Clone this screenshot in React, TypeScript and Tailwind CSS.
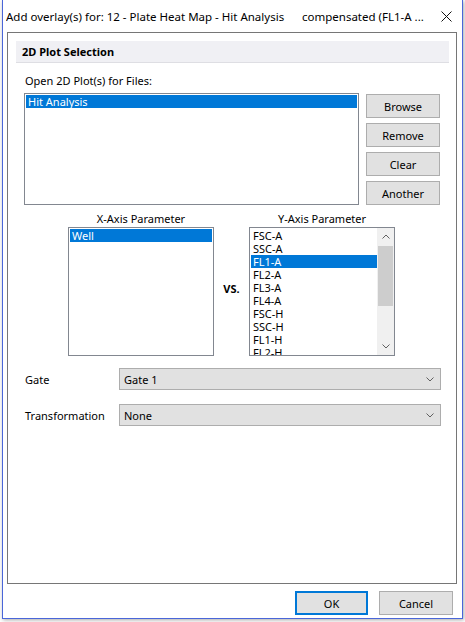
import React from 'react';

const files = ['Hit Analysis'];
const yParams = ['FSC-A', 'SSC-A', 'FL1-A', 'FL2-A', 'FL3-A', 'FL4-A', 'FSC-H', 'SSC-H', 'FL1-H', 'FL2-H'];

function Chevron({ up = false }: { up?: boolean }) {
  return (
    <svg width="8" height="5" viewBox="0 0 8 5" className={up ? 'rotate-180' : ''}>
      <path d="M0.5 0.5 L4 4 L7.5 0.5" fill="none" stroke="#606060" strokeWidth="1" />
    </svg>
  );
}

function SideButton({ label }: { label: string }) {
  return (
    <div className="w-[74px] h-[24px] border border-[#adadad] bg-[#e1e1e1] flex items-center justify-center">
      {label}
    </div>
  );
}

function Combo({ value }: { value: string }) {
  return (
    <div className="w-[322px] h-[22px] border border-[#adadad] bg-[#e1e1e1] flex items-center pl-[4px] pr-[6px]">
      <span className="flex-1">{value}</span>
      <Chevron />
    </div>
  );
}

export default function App() {
  return (
    <div className="w-[465px] h-[622px] bg-white text-[11px] text-black font-['Noto_Sans',sans-serif] leading-[15px]">
      <div className="ml-[2px] w-[461px] h-[619px] border-x border-b border-[#4a66d9] bg-white flex flex-col shadow-[1px_1px_4px_rgba(0,0,0,0.35)]">
        {/* title bar */}
        <div className="h-[32px] flex items-center pl-[3px] shrink-0 text-[11.5px]">
          <span className="w-[296px] whitespace-nowrap overflow-hidden">Add overlay(s) for: 12 - Plate Heat Map - Hit Analysis</span>
          <span className="whitespace-nowrap">compensated (FL1-A ...</span>
          <svg width="11" height="11" viewBox="0 0 11 11" className="ml-auto mr-[10px]">
            <path d="M0.5 0.5 L10.5 10.5 M10.5 0.5 L0.5 10.5" stroke="#111" strokeWidth="1" />
          </svg>
        </div>

        {/* group box */}
        <div className="ml-[4px] w-[450px] h-[552px] border border-[#767676] shrink-0">
          <div className="mt-[8px] ml-[8px] w-[433px] h-[22px] bg-[#f0f0f4] border-b border-[#dedee3] flex items-center pl-[6px] font-bold">
            2D Plot Selection
          </div>

          <div className="mt-[9px] ml-[17px] h-[16px] flex items-center">Open 2D Plot(s) for Files:</div>

          <div className="mt-[5px] ml-[16px] flex">
            <div className="w-[335px] h-[112px] border border-[#828790] p-[1px]">
              {files.map((f) => (
                <div key={f} className="h-[13px] leading-[13px] bg-[#0078d7] text-white pl-[2px]">{f}</div>
              ))}
            </div>
            <div className="ml-[7px] mt-[1px] flex flex-col gap-[5px]">
              <SideButton label="Browse" />
              <SideButton label="Remove" />
              <SideButton label="Clear" />
              <SideButton label="Another" />
            </div>
          </div>

          <div className="mt-[5px] ml-[60px] flex">
            <div className="w-[146px] flex flex-col">
              <div className="h-[16px] flex items-center justify-center">X-Axis Parameter</div>
              <div className="mt-[1px] h-[129px] border border-[#828790] p-[1px]">
                <div className="h-[13px] leading-[13px] bg-[#0078d7] text-white pl-[2px]">Well</div>
              </div>
            </div>
            <div className="w-[35px] flex items-center justify-center pt-[10px] font-bold">VS.</div>
            <div className="w-[146px] flex flex-col">
              <div className="h-[16px] flex items-center justify-center">Y-Axis Parameter</div>
              <div className="mt-[1px] h-[129px] border border-[#828790] flex overflow-hidden">
                <div className="flex-1 pl-[1px] pt-[1px] overflow-hidden">
                  {yParams.map((p) => (
                    <div
                      key={p}
                      className={
                        p === 'FL1-A'
                          ? 'h-[13px] leading-[13px] bg-[#0078d7] text-white pl-[2px]'
                          : 'h-[13px] leading-[13px] pl-[2px]'
                      }
                    >
                      {p}
                    </div>
                  ))}
                </div>
                <div className="w-[17px] bg-[#f0f0f0] flex flex-col">
                  <div className="h-[17px] flex items-center justify-center">
                    <Chevron up />
                  </div>
                  <div className="flex-1">
                    <div className="mt-[1px] ml-[1px] w-[15px] h-[60px] bg-[#cdcdcd]" />
                  </div>
                  <div className="h-[17px] flex items-center justify-center">
                    <Chevron />
                  </div>
                </div>
              </div>
            </div>
          </div>

          <div className="mt-[12px] ml-[17px] flex items-center">
            <div className="w-[94px]">Gate</div>
            <Combo value="Gate 1" />
          </div>
          <div className="mt-[14px] ml-[17px] flex items-center">
            <div className="w-[94px]">Transformation</div>
            <Combo value="None" />
          </div>
        </div>

        {/* dialog buttons */}
        <div className="mt-[7px] flex justify-end gap-[11px] pr-[9px]">
          <div className="w-[73px] h-[24px] border-2 border-[#0078d7] bg-[#e1e1e1] flex items-center justify-center">OK</div>
          <div className="w-[74px] h-[24px] border border-[#adadad] bg-[#e1e1e1] flex items-center justify-center">Cancel</div>
        </div>
      </div>
    </div>
  );
}
